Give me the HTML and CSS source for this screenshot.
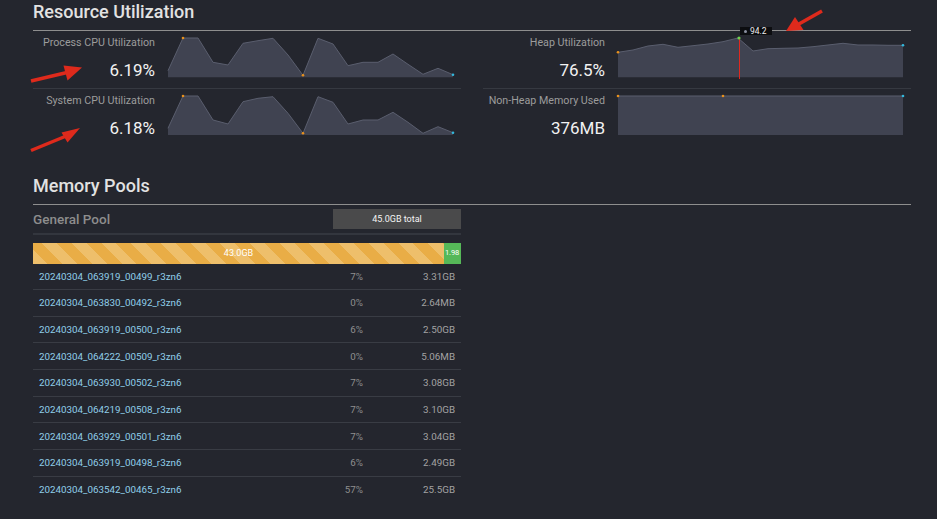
FILE: index.html
```html
<!DOCTYPE html>
<html lang="en">
<head>
<meta charset="utf-8">
<title>Resource Utilization</title>
<link rel="stylesheet" href="styles.css">
</head>
<body>
<main class="page">
  <section class="section">
    <h2 class="section-title">Resource Utilization</h2>
    <div class="metrics">
      <div class="metric-col">
        <div class="metric">
          <div class="metric-text">
            <div class="metric-label">Process CPU Utilization</div>
            <div class="metric-value">6.19%</div>
          </div>
          <div class="chart">
            <svg class="spark" width="287" height="42" viewBox="0 0 287 42">
              <polygon class="area" points="0,34.7 15,2 30,2 45,26.3 60,29 75,7.3 90,4.7 105,2.3 120,19 135,39.3 150,2.3 165,8 180,29.7 195,26.3 210,26.3 225,18 240,28.3 255,38.3 270,32.3 285,38.7 285,41.3 0,41.3"/>
              <polyline class="line" points="0,34.7 15,2 30,2 45,26.3 60,29 75,7.3 90,4.7 105,2.3 120,19 135,39.3 150,2.3 165,8 180,29.7 195,26.3 210,26.3 225,18 240,28.3 255,38.3 270,32.3 285,38.7"/>
              <circle class="dot-min" cx="15" cy="2" r="1.3"/>
              <circle class="dot-min" cx="135" cy="39.3" r="1.3"/>
              <circle class="dot-last" cx="285" cy="38.7" r="1.3"/>
            </svg>
          </div>
        </div>
        <div class="metric">
          <div class="metric-text">
            <div class="metric-label">System CPU Utilization</div>
            <div class="metric-value">6.18%</div>
          </div>
          <div class="chart">
            <svg class="spark" width="287" height="42" viewBox="0 0 287 42">
              <polygon class="area" points="0,34.3 15,2 30,2 45,26 60,30 75,7.7 90,4.3 105,2.7 120,19.3 135,39.3 150,2.7 165,8.3 180,30 195,26 210,26 225,18.3 240,28.3 255,39.3 270,32.7 285,38.7 285,41 0,41"/>
              <polyline class="line" points="0,34.3 15,2 30,2 45,26 60,30 75,7.7 90,4.3 105,2.7 120,19.3 135,39.3 150,2.7 165,8.3 180,30 195,26 210,26 225,18.3 240,28.3 255,39.3 270,32.7 285,38.7"/>
              <circle class="dot-min" cx="15" cy="2" r="1.3"/>
              <circle class="dot-min" cx="135" cy="39.3" r="1.3"/>
              <circle class="dot-last" cx="285" cy="38.7" r="1.3"/>
            </svg>
          </div>
        </div>
      </div>
      <div class="metric-col">
        <div class="metric">
          <div class="metric-text">
            <div class="metric-label">Heap Utilization</div>
            <div class="metric-value">76.5%</div>
          </div>
          <div class="chart">
            <svg class="spark" width="287" height="42" viewBox="0 0 287 42">
              <polygon class="area" points="0,16.3 15,14 30,10 45,8.3 60,11.3 75,9.7 90,8 105,5.7 120,2 135,15 150,12.7 165,12.3 180,12 195,10.7 210,9 225,7.3 240,9 255,9 270,9.3 285,9.3 285,41.3 0,41.3"/>
              <polyline class="line" points="0,16.3 15,14 30,10 45,8.3 60,11.3 75,9.7 90,8 105,5.7 120,2 135,15 150,12.7 165,12.3 180,12 195,10.7 210,9 225,7.3 240,9 255,9 270,9.3 285,9.3"/>
              <rect class="cursor" x="121" y="2" width="1" height="41"/>
              <circle class="dot-min" cx="0" cy="16.3" r="1.3"/>
              <circle class="dot-max" cx="121" cy="2" r="1.6"/>
              <circle class="dot-last" cx="285" cy="9.3" r="1.3"/>
            </svg>
            <div class="tooltip"><span class="tooltip-dot"></span>94.2</div>
          </div>
        </div>
        <div class="metric">
          <div class="metric-text">
            <div class="metric-label">Non-Heap Memory Used</div>
            <div class="metric-value">376MB</div>
          </div>
          <div class="chart">
            <svg class="spark" width="287" height="42" viewBox="0 0 287 42">
              <polygon class="area" points="0,2 285,2 285,41 0,41"/>
              <polyline class="line" points="0,2 285,2"/>
              <circle class="dot-min" cx="0" cy="2" r="1.3"/>
              <circle class="dot-min" cx="105" cy="2" r="1.3"/>
              <circle class="dot-last" cx="285" cy="2" r="1.3"/>
            </svg>
          </div>
        </div>
      </div>
    </div>
  </section>

  <section class="section pools">
    <h2 class="section-title">Memory Pools</h2>
    <div class="pool">
      <div class="pool-head">
        <span class="pool-title">General Pool</span>
        <span class="pool-total">45.0GB total</span>
      </div>
      <div class="pool-bar">
        <div class="bar-used">43.0GB</div>
        <div class="bar-free">1.98</div>
      </div>
      <div class="pool-rows">
        <div class="pool-row"><span class="pool-name">20240304_063919_00499_r3zn6</span><span class="pool-pct">7%</span><span class="pool-size">3.31GB</span></div>
        <div class="pool-row"><span class="pool-name">20240304_063830_00492_r3zn6</span><span class="pool-pct">0%</span><span class="pool-size">2.64MB</span></div>
        <div class="pool-row"><span class="pool-name">20240304_063919_00500_r3zn6</span><span class="pool-pct">6%</span><span class="pool-size">2.50GB</span></div>
        <div class="pool-row"><span class="pool-name">20240304_064222_00509_r3zn6</span><span class="pool-pct">0%</span><span class="pool-size">5.06MB</span></div>
        <div class="pool-row"><span class="pool-name">20240304_063930_00502_r3zn6</span><span class="pool-pct">7%</span><span class="pool-size">3.08GB</span></div>
        <div class="pool-row"><span class="pool-name">20240304_064219_00508_r3zn6</span><span class="pool-pct">7%</span><span class="pool-size">3.10GB</span></div>
        <div class="pool-row"><span class="pool-name">20240304_063929_00501_r3zn6</span><span class="pool-pct">7%</span><span class="pool-size">3.04GB</span></div>
        <div class="pool-row"><span class="pool-name">20240304_063919_00498_r3zn6</span><span class="pool-pct">6%</span><span class="pool-size">2.49GB</span></div>
        <div class="pool-row"><span class="pool-name">20240304_063542_00465_r3zn6</span><span class="pool-pct">57%</span><span class="pool-size">25.5GB</span></div>
      </div>
    </div>
  </section>

  <svg class="annotations" width="937" height="519" viewBox="0 0 937 519" aria-hidden="true">
    <line x1="31" y1="81" x2="67" y2="72.5"/>
    <polygon points="82,67.5 63.5,65.5 67.5,80.5"/>
    <line x1="31" y1="150.5" x2="65" y2="136.5"/>
    <polygon points="80,128 61.5,132.5 67.5,142.5"/>
    <line x1="822" y1="11" x2="798" y2="24.5"/>
    <polygon points="786,31 795,17 803.5,30"/>
  </svg>
</main>
</body>
</html>
```

FILE: styles.css
```css
html, body {
  margin: 0;
  padding: 0;
}

body {
  background: #24262e;
  font-family: Roboto, "Liberation Sans", Arial, sans-serif;
  color: #e6e6e6;
  width: 937px;
  height: 519px;
  overflow: hidden;
}

.page {
  position: relative;
  padding: 0 26px 0 33px;
  width: 878px;
  height: 519px;
}

.section-title {
  margin: 0;
  padding: 1px 0 7px;
  font-size: 18px;
  line-height: 22px;
  font-weight: 500;
  color: #e2e2e2;
  border-bottom: 1px solid #8e8e8e;
}

.metrics {
  display: grid;
  grid-template-columns: 428px 428px;
  column-gap: 22px;
}

.metric {
  display: flex;
  gap: 13px;
  padding: 5px 6px 8px 0;
  height: 44px;
}

.metric:first-child {
  border-bottom: 1px solid #363941;
}

.metric-text {
  width: 122px;
  flex: none;
  display: flex;
  flex-direction: column;
  align-items: flex-end;
}

.metric-label {
  font-size: 10.7px;
  line-height: 14px;
  color: #9c9c9c;
  white-space: nowrap;
}

.metric-value {
  margin-top: 10px;
  font-size: 17px;
  line-height: 20px;
  color: #f2f2f2;
}

.chart {
  position: relative;
  width: 287px;
  height: 42px;
}

.spark {
  display: block;
  overflow: visible;
}

.spark .area {
  fill: #404351;
}

.spark .line {
  fill: none;
  stroke: #5a5e6e;
  stroke-width: 1;
}

.spark .cursor {
  fill: #e0281e;
}

.dot-min {
  fill: #e8901c;
}

.dot-max {
  fill: #6fd150;
}

.dot-last {
  fill: #33b8dd;
}

.tooltip {
  position: absolute;
  left: 122px;
  top: -9px;
  height: 8px;
  padding: 0 5px 0 4px;
  display: flex;
  align-items: center;
  gap: 3px;
  background: #0c0d10;
  color: #eeeeee;
  font-size: 8.5px;
  line-height: 8px;
}

.tooltip-dot {
  width: 3px;
  height: 3px;
  border-radius: 50%;
  background: #8a8fa0;
}

.pools {
  margin-top: 28px;
}

.pool {
  width: 428px;
}

.pool-head {
  display: flex;
  align-items: center;
  justify-content: space-between;
  padding: 4px 0;
  border-bottom: 2px solid #33363e;
}

.pool-title {
  font-size: 13.5px;
  font-weight: 500;
  color: #8d8d8d;
}

.pool-total {
  width: 128px;
  height: 20px;
  background: #4a4a4b;
  color: #f4f4f4;
  font-size: 9px;
  line-height: 20px;
  text-align: center;
}

.pool-bar {
  display: flex;
  margin-top: 8px;
  height: 20.5px;
  font-size: 9px;
  line-height: 20.5px;
  color: #ffffff;
}

.bar-used {
  width: 411px;
  text-align: center;
  background: repeating-linear-gradient(45deg, #eebf6b 0 10.5px, #e9ad46 10.5px 21px);
}

.bar-free {
  width: 17px;
  padding-left: 1px;
  box-sizing: border-box;
  overflow: hidden;
  white-space: nowrap;
  font-size: 7.5px;
  letter-spacing: -0.1px;
  background: #56b858;
}

.pool-row {
  display: flex;
  align-items: center;
  height: 25.67px;
  padding: 0 6px;
  font-size: 9.8px;
  border-bottom: 1px solid #393c44;
}

.pool-row:last-child {
  border-bottom: none;
}

.pool-name {
  flex: 1;
  color: #90cfea;
}

.pool-pct {
  width: 40px;
  text-align: right;
  color: #8f8f8f;
}

.pool-size {
  width: 92px;
  text-align: right;
  color: #a3a3a3;
}

.annotations {
  position: absolute;
  left: 0;
  top: 0;
  pointer-events: none;
}

.annotations line {
  stroke: #de2a1c;
  stroke-width: 3.5;
}

.annotations polygon {
  fill: #de2a1c;
}
```
